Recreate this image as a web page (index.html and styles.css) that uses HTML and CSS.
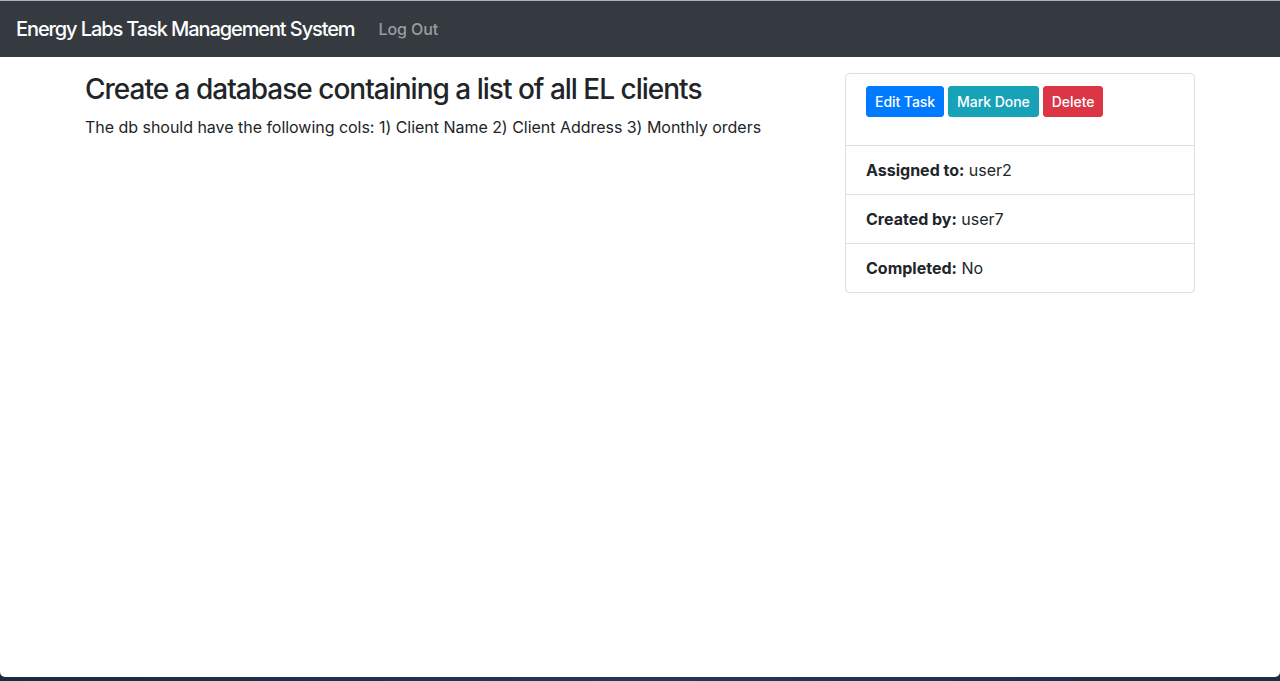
FILE: index.html
```html
<!DOCTYPE html>
<html lang="en">
<head>
<meta charset="utf-8">
<title>Energy Labs Task Management System</title>
<link rel="stylesheet" href="styles.css">
</head>
<body>
<div class="window">
  <nav class="navbar">
    <a class="brand" href="#">Energy Labs Task Management System</a>
    <a class="nav-link" href="#">Log Out</a>
  </nav>
  <main class="container">
    <section class="main-col">
      <h3 class="title">Create a database containing a list of all EL clients</h3>
      <p class="desc">The db should have the following cols: 1) Client Name 2) Client Address 3) Monthly orders</p>
    </section>
    <aside class="side-col">
      <div class="card">
        <div class="card-body">
          <a class="btn btn-primary" href="#">Edit Task</a>
          <a class="btn btn-info" href="#">Mark Done</a>
          <a class="btn btn-danger" href="#">Delete</a>
        </div>
        <ul class="list">
          <li class="list-item"><strong>Assigned to:</strong> user2</li>
          <li class="list-item"><strong>Created by:</strong> user7</li>
          <li class="list-item"><strong>Completed:</strong> No</li>
        </ul>
      </div>
    </aside>
  </main>
</div>
</body>
</html>
```
FILE: styles.css
```css
* { box-sizing: border-box; }
html, body { margin: 0; padding: 0; height: 100%; }
body {
  background: linear-gradient(90deg, #1b2a44, #23375a 50%, #1d2c47);
  font-family: Inter, "Noto Sans", sans-serif;
  color: #212529;
  font-size: 16px;
  line-height: 1.5;
}
.window {
  height: 677px;
  background: #fff;
  border-top: 1px solid #b3b3b3;
  border-radius: 0 0 5px 5px;
  overflow: hidden;
}
.navbar {
  height: 56px;
  background: #343a40;
  display: flex;
  align-items: center;
  padding: 0 16px;
}
.brand {
  color: #fff;
  text-decoration: none;
  font-size: 20px;
  font-weight: 500;
  letter-spacing: -1.1px;
  margin-right: 24px;
}
.nav-link {
  color: rgba(255,255,255,.5);
  text-decoration: none;
  font-size: 16px;
  font-weight: 500;
  letter-spacing: -0.1px;
}
.container {
  width: 1140px;
  margin: 16px auto 0;
  display: flex;
}
.main-col { width: 760px; padding: 0 15px; }
.side-col { width: 380px; padding: 0 15px; }
.title {
  margin: 0 0 8px;
  font-size: 28px;
  font-weight: 500;
  line-height: 1.2;
  letter-spacing: -1px;
}
.desc { margin: 0; letter-spacing: -0.03px; }
.card {
  border: 1px solid rgba(0,0,0,.125);
  border-radius: 4px;
}
.card-body {
  padding: 12px 20px 28px;
  display: flex;
  gap: 4px;
}
.btn {
  display: inline-block;
  font-size: 14px;
  line-height: 21px;
  padding: 4px 8px;
  border-radius: 3px;
  color: #fff;
  text-decoration: none;
  font-weight: 500;
  letter-spacing: -0.05px;
  border: 1px solid transparent;
}
.btn-primary { background: #007bff; border-color: #007bff; }
.btn-info { background: #17a2b8; border-color: #17a2b8; }
.btn-danger { background: #dc3545; border-color: #dc3545; }
.list { list-style: none; margin: 0; padding: 0; }
.list-item {
  padding: 12px 20px;
  border-top: 1px solid rgba(0,0,0,.125);
}
.list-item strong { font-weight: 700; }
```
